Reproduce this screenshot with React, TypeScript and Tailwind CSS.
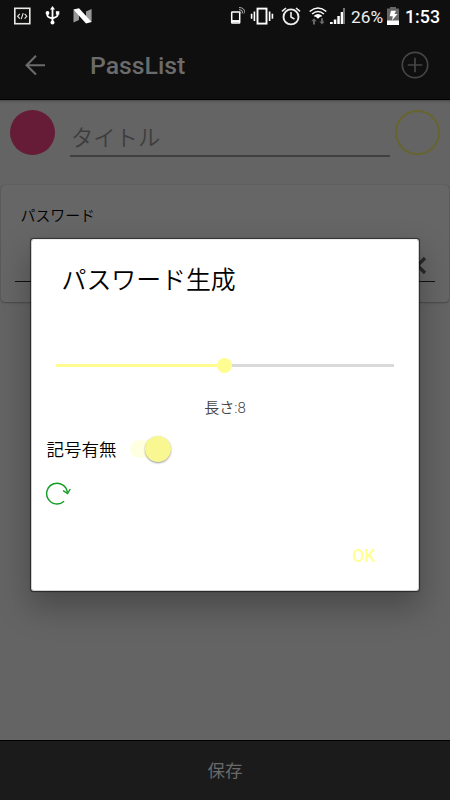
import React from "react";

function StatusBar() {
  return (
    <div className="flex h-8 shrink-0 items-center text-white">
      <svg className="ml-[13px] h-[18px] w-[18px] shrink-0 mt-[-1px]" viewBox="0 0 18 18" fill="none" stroke="#e8e8e4">
        <rect x="1.8" y="1.3" width="15" height="15.4" strokeWidth="1.6" />
        <path d="M6.8 6.8 4.6 9.2l2.2 2.4M11.6 6.8l2.2 2.4-2.2 2.4M10.2 6.2 8.2 12.2" strokeWidth="1.1" />
      </svg>
      <svg className="ml-[14px] h-5 w-4 shrink-0 mt-[-2px]" viewBox="0 0 16 20" fill="none" stroke="#fff" strokeWidth="1.8">
        <path d="M7.5 3v14M2.4 8v2.6q0 1.6 5.1 3.1M12.6 8v2q0 1.7-5.1 3.3" />
        <path d="M7.5 1 10 4.6H5z" fill="#fff" stroke="none" />
        <circle cx="7.5" cy="17.6" r="2" fill="#fff" stroke="none" />
        <circle cx="2.5" cy="8" r="1.9" fill="#fff" stroke="none" />
        <rect x="10.9" y="6.2" width="3.4" height="3.4" fill="#fff" stroke="none" />
      </svg>
      <svg className="ml-[12px] h-4 w-5 shrink-0 mt-[-1px]" viewBox="0 0 20 16">
        <path d="M.5 1.5 6 4v8L.5 14.5zM13 3.5 18.6 1v13L13 11z" fill="#999" />
        <path d="M.5 1.5 6 .2 18.6 14 13 15.4z" fill="#fff" />
      </svg>
      <svg className="ml-[136px] h-5 w-4 shrink-0" viewBox="0 0 16 20" fill="none" stroke="#fff">
        <rect x="2.7" y="6" width="8" height="11" rx=".6" strokeWidth="1.5" />
        <path d="M2.7 15.2h8" strokeWidth="2.3" />
        <path d="M10 5.5q2 0 2 2M10 3.5q4 0 4 4M10 1.5q6 0 6 6" stroke="#bbb" strokeWidth=".9" />
      </svg>
      <svg className="ml-[4.5px] h-5 w-6 shrink-0 mt-[-1px]" viewBox="0 0 24 20" fill="none" stroke="#fff" strokeWidth="1.9">
        <rect x="7.5" y="2.6" width="9" height="15" />
        <path d="M4.4 5.5v9.5M1.6 7.7v5M19.6 5.5v9.5M22.4 7.7v5" strokeWidth="1.6" />
      </svg>
      <svg className="ml-[7.5px] h-5 w-5 shrink-0 mt-[-1px]" viewBox="0 0 20 20" fill="none" stroke="#eee" strokeWidth="1.9">
        <circle cx="10" cy="10.9" r="7.5" />
        <path d="M10 6v5l3.5 2.1M1 5.4 5 2M19 5.4 15 2" strokeWidth="1.6" />
      </svg>
      <svg className="ml-[8px] h-5 w-[18px] shrink-0" viewBox="0 0 18 20" fill="none" stroke="#fff" strokeWidth="1.6">
        <path d="M.7 5.5q8.3-7 16.6 0M3.1 8q5.9-5 11.8 0M5.4 10.3q3.6-3 7.2 0" />
        <path d="m6.2 10.3 2.8 2.4 2.8-2.4q-2.8-2-5.6 0z" fill="#fff" stroke="none" />
        <path d="m5 12.3 2.8 3H6v3.2H4v-3.2H2.3zM13 18.5l-2.8-3H12v-3.2h2v3.2h1.8z" fill="#666" stroke="none" />
      </svg>
      <svg className="ml-[3px] h-[18px] w-4 shrink-0 mt-[-1px]" viewBox="0 0 16 18">
        <path d="M0 15h2.7v2H0zM3.8 12.5h2.5v4.5H3.8zM7.3 9h2.5v8H7.3zM10.7 5h2.3v12h-2.3z" fill="#fff" />
        <path d="M13 1h2v16h-2z" fill="#777" />
      </svg>
      <span className="ml-[5px] mt-px w-[34px] whitespace-nowrap text-[17.3px] leading-8 text-[#eee]">26%</span>
      <svg className="ml-[2px] h-[18px] w-3 shrink-0" viewBox="0 0 12 18">
        <path d="M0 1.6h3V0h6v1.6h3V18H0z" fill="#666" />
        <path d="M0 13.5h12V18H0z" fill="#fff" />
        <path d="M4 3.7h5L7.5 7h3L5 13.4l.8-4.2H2.6z" fill="#fff" />
      </svg>
      <span className="ml-[6px] mt-px whitespace-nowrap text-[17.8px] font-medium leading-8">1:53</span>
    </div>
  );
}

function AppBar() {
  return (
    <header className="flex h-[68px] shrink-0 items-center border-b border-black pb-px text-[#6b6b6b]">
      <svg className="ml-[24px] h-6 w-6 mt-px" viewBox="0 0 24 24" fill="none" stroke="currentColor" strokeWidth="2.1">
        <path d="M21 11.2H3M12 1.8 2.6 11.2 12 20.6" />
      </svg>
      <h1 className="ml-[42px] mt-[2px] text-[24.8px] font-medium leading-8">PassList</h1>
      <svg className="ml-auto mr-[21px] h-7 w-7" viewBox="0 0 28 28" fill="none" stroke="#464646" strokeWidth="1.7">
        <circle cx="14" cy="14" r="12.7" />
        <path d="M14 6.7v14.6M6.7 14h14.6" />
      </svg>
    </header>
  );
}

function PasswordDialog() {
  return (
    <section className="absolute left-[31px] top-[239px] flex h-[352px] w-[388px] flex-col rounded-[3px] border border-[#d0d0d0] border-t-[#eeeeee] bg-white shadow-[0_0_1px_0.5px_rgba(0,0,0,0.5),0_15px_32px_2px_rgba(0,0,0,0.27)]">
      <h2 className="ml-[29.5px] mt-[23px] text-[24.9px] font-[350] leading-9 text-black">パスワード生成</h2>
      <div className="ml-[24px] mt-[58px] flex h-4 w-[338px] items-center">
        <div className="h-[3px] w-[161px] bg-[#fffc91]" />
        <div className="h-[15px] w-[15px] rounded-full bg-[#fffc91]" />
        <div className="h-[3px] flex-1 bg-[#dadada]" />
      </div>
      <p className="mt-[23px] text-center text-[15px] font-[350] leading-6 text-[#444]">長さ:8</p>
      <div className="ml-[14.5px] mt-[14px] flex h-[30px] items-center">
        <span className="mt-[2px] w-[70px] whitespace-nowrap text-[17.5px] font-[350] text-black">記号有無</span>
        <div className="ml-[13.5px] flex h-[18px] w-[41px] items-center justify-end rounded-full bg-[#ffffe2]">
          <div className="h-[26px] w-[26px] shrink-0 rounded-full bg-[#f9f791] shadow-[0_1px_2px_rgba(0,0,0,0.4)]" />
        </div>
      </div>
      <svg className="ml-[13px] mt-[17px] h-[26px] w-[26px]" viewBox="0 0 26 26" fill="none" stroke="#129c22" strokeWidth="1.4">
        <path d="M19.1 20.3A10.4 10.4 0 1 1 22.4 11.5" />
        <path d="m18.1 9.7 4.5 2.9 2.7-4.6" />
      </svg>
      <button className="ml-auto mr-[39px] mt-[33px] h-8 w-[30px] whitespace-nowrap text-[17.5px] font-medium leading-8 text-[#ffff94]">OK</button>
    </section>
  );
}

export default function App() {
  return (
    <div className="relative flex h-[800px] w-[450px] flex-col overflow-hidden bg-[#0f0f0f] font-['Roboto','Noto_Sans_CJK_JP',sans-serif]">
      <StatusBar />
      <AppBar />
      <main className="flex flex-1 flex-col bg-[#646464] shadow-[inset_0_4px_3px_-3px_rgba(0,0,0,0.3)]">
        <div className="flex h-[85px] items-start pt-[10px]">
          <div className="ml-[10px] h-[45px] w-[45px] rounded-full bg-[#661b36]" />
          <div className="ml-[15px] h-[47px] w-[320px] border-b-2 border-[#404040] pl-px text-[22.3px] font-[350] leading-[57px] text-[#3d3d3d]">タイトル</div>
          <div className="ml-[5px] h-[45px] w-[45px] rounded-full border-[2.5px] border-[#66652f]" />
        </div>
        <div className="mx-px h-[117px] rounded-sm bg-[#666] shadow-[0_0_1px_rgba(0,0,0,0.3),0_1px_2px_rgba(0,0,0,0.25)]">
          <p className="ml-[19.5px] pt-[19px] text-[14.9px] font-[350] leading-6 text-black">パスワード</p>
          <div className="ml-[14px] mt-[19px] flex h-[35px] w-[420px] items-center justify-end border-b border-[#111] pr-[8px] pt-[2px]">
            <svg className="h-[19px] w-[19px]" viewBox="0 0 19 19" fill="none" stroke="#292929" strokeWidth="3.2">
              <path d="m2 2 15 15M17 2 2 17" />
            </svg>
          </div>
        </div>
      </main>
      <footer className="flex h-[60px] shrink-0 items-center justify-center border-t border-black bg-[#1b1b1b] pt-[2px] text-[17.5px] text-[#696969]">保存</footer>
      <PasswordDialog />
    </div>
  );
}
